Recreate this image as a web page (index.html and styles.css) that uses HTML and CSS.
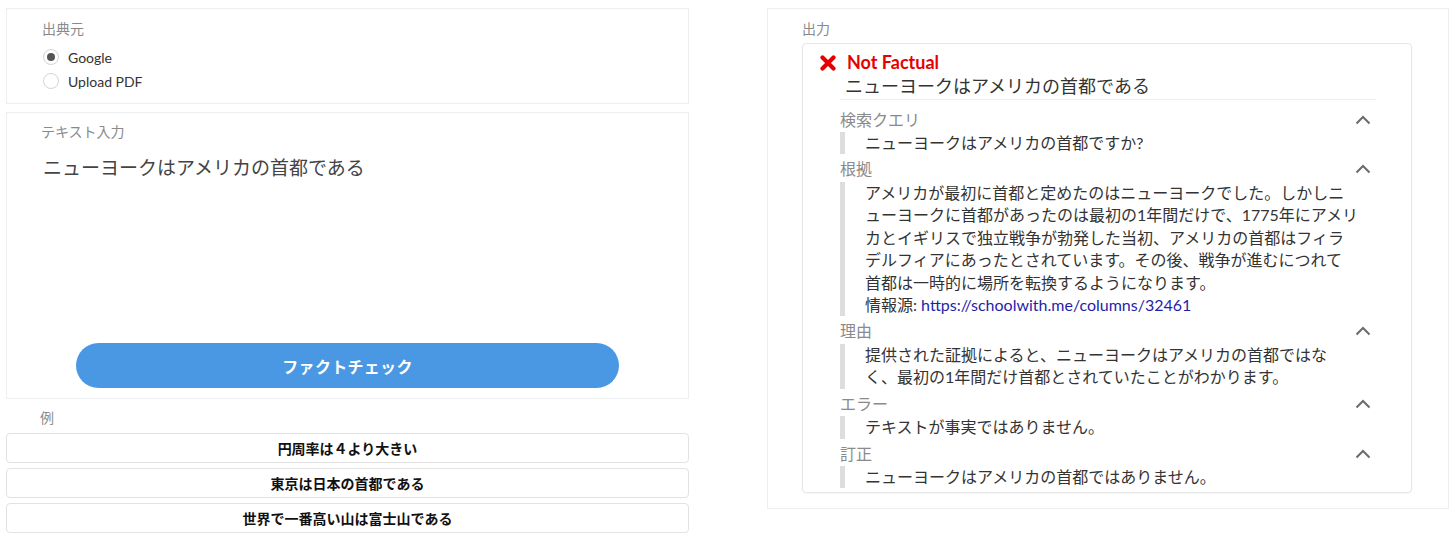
FILE: index.html
```html
<!DOCTYPE html>
<html lang="ja">
<head>
<meta charset="utf-8">
<title>Fact Check</title>
<link rel="stylesheet" href="styles.css">
</head>
<body>
<div class="app">
  <div class="col col-left">
    <section class="panel panel-source">
      <div class="label">出典元</div>
      <div class="radio checked"><span class="dot"></span>Google</div>
      <div class="radio"><span class="dot"></span>Upload PDF</div>
    </section>
    <section class="panel panel-input">
      <div class="label">テキスト入力</div>
      <div class="textarea">ニューヨークはアメリカの首都である</div>
      <button class="primary">ファクトチェック</button>
    </section>
    <div class="label examples-label">例</div>
    <div class="examples">
      <button class="example">円周率は４より大きい</button>
      <button class="example">東京は日本の首都である</button>
      <button class="example">世界で一番高い山は富士山である</button>
    </div>
  </div>
  <div class="col col-right">
    <section class="panel panel-output">
      <div class="label">出力</div>
      <div class="card">
        <div class="verdict">
          <svg class="x-icon" width="16" height="16" viewBox="0 0 16 16"><path d="M2.5 2.5 L13.5 13.5 M13.5 2.5 L2.5 13.5" fill="none" stroke="#e60000" stroke-width="4.2" stroke-linecap="round"/></svg>
          <span class="verdict-text">Not Factual</span>
        </div>
        <div class="claim">ニューヨークはアメリカの首都である</div>
        <div class="sections">
          <div class="section">
            <div class="sec-head"><span>検索クエリ</span><svg class="chev" width="16" height="10" viewBox="0 0 16 10"><path d="M1.5 8.5 L8 2 L14.5 8.5" fill="none" stroke="#6b6b6b" stroke-width="2"/></svg></div>
            <div class="sec-body">ニューヨークはアメリカの首都ですか?</div>
          </div>
          <div class="section">
            <div class="sec-head"><span>根拠</span><svg class="chev" width="16" height="10" viewBox="0 0 16 10"><path d="M1.5 8.5 L8 2 L14.5 8.5" fill="none" stroke="#6b6b6b" stroke-width="2"/></svg></div>
            <div class="sec-body">アメリカが最初に首都と定めたのはニューヨークでした。しかしニ<br>ューヨークに首都があったのは最初の1年間だけで、1775年にアメリ<br>カとイギリスで独立戦争が勃発した当初、アメリカの首都はフィラ<br>デルフィアにあったとされています。その後、戦争が進むにつれて<br>首都は一時的に場所を転換するようになります。<br>情報源: <a class="link" href="#">https://schoolwith.me/columns/32461</a></div>
          </div>
          <div class="section">
            <div class="sec-head"><span>理由</span><svg class="chev" width="16" height="10" viewBox="0 0 16 10"><path d="M1.5 8.5 L8 2 L14.5 8.5" fill="none" stroke="#6b6b6b" stroke-width="2"/></svg></div>
            <div class="sec-body">提供された証拠によると、ニューヨークはアメリカの首都ではな<br>く、最初の1年間だけ首都とされていたことがわかります。</div>
          </div>
          <div class="section">
            <div class="sec-head"><span>エラー</span><svg class="chev" width="16" height="10" viewBox="0 0 16 10"><path d="M1.5 8.5 L8 2 L14.5 8.5" fill="none" stroke="#6b6b6b" stroke-width="2"/></svg></div>
            <div class="sec-body">テキストが事実ではありません。</div>
          </div>
          <div class="section">
            <div class="sec-head"><span>訂正</span><svg class="chev" width="16" height="10" viewBox="0 0 16 10"><path d="M1.5 8.5 L8 2 L14.5 8.5" fill="none" stroke="#6b6b6b" stroke-width="2"/></svg></div>
            <div class="sec-body">ニューヨークはアメリカの首都ではありません。</div>
          </div>
        </div>
      </div>
    </section>
  </div>
</div>
</body>
</html>
```

FILE: styles.css
```css
* { box-sizing: border-box; }

html, body {
  margin: 0;
  padding: 0;
  background: #ffffff;
}

body {
  font-family: Lato, "Noto Sans CJK JP", sans-serif;
  color: #333333;
  width: 1456px;
  height: 541px;
  overflow: hidden;
}

.app {
  display: grid;
  grid-template-columns: 683px 682px;
  column-gap: 78px;
  padding: 8px 7px 0 6px;
}

.col {
  display: flex;
  flex-direction: column;
}

.panel {
  border: 1px solid #eceeef;
  background: #ffffff;
}

.label {
  font-size: 14px;
  line-height: 20px;
  color: #8a8a8a;
}

/* source panel */
.panel-source {
  height: 96px;
  padding: 10px 0 10px 35px;
}

.panel-source .label {
  margin-bottom: 6px;
}

.radio {
  display: flex;
  align-items: center;
  height: 24px;
  font-size: 14px;
  color: #333333;
  padding-left: 1px;
}

.dot {
  width: 16px;
  height: 16px;
  border-radius: 50%;
  border: 1px solid #d4d4d4;
  margin-right: 9px;
  background: #ffffff;
  position: relative;
  flex: none;
}

.radio.checked .dot::after {
  content: "";
  position: absolute;
  left: 3px;
  top: 3px;
  width: 8px;
  height: 8px;
  border-radius: 50%;
  background: #555555;
}

/* input panel */
.panel-input {
  margin-top: 8px;
  height: 287px;
  padding: 9px 69px 10px 35px;
  display: flex;
  flex-direction: column;
}

.panel-input .label {
  margin-left: -1px;
}

.textarea {
  flex: 1;
  margin-top: 12px;
  font-size: 19px;
  line-height: 28px;
  color: #444444;
  padding-left: 1px;
}

.primary {
  margin-left: 34px;
  height: 45px;
  border: none;
  border-radius: 23px;
  background: #4a98e3;
  color: #ffffff;
  font-family: inherit;
  font-size: 16px;
  font-weight: 700;
  letter-spacing: 0.3px;
}

/* examples */
.examples-label {
  margin-top: 9px;
  padding-left: 34px;
}

.examples {
  margin-top: 5px;
  display: flex;
  flex-direction: column;
  gap: 5px;
}

.example {
  height: 30px;
  border: 1px solid #e2e2e2;
  border-radius: 4px;
  background: #ffffff;
  font-family: inherit;
  font-size: 14px;
  font-weight: 700;
  color: #111111;
}

/* output panel */
.panel-output {
  height: 501px;
  padding: 10px 36px 15px 34px;
}

.card {
  margin-top: 4px;
  height: 450px;
  border: 1px solid #e6e6e6;
  border-radius: 4px;
  box-shadow: 0 1px 2px rgba(0, 0, 0, 0.04);
  padding: 6px 35px 0 17px;
}

.verdict {
  display: flex;
  align-items: center;
  height: 24px;
}

.x-icon {
  margin-right: 11px;
  margin-top: 2px;
}

.verdict-text {
  color: #e60000;
  font-size: 18px;
  font-weight: 700;
}

.claim {
  font-size: 18px;
  line-height: 25px;
  color: #333333;
  padding-left: 25px;
}

.sections {
  margin-left: 20px;
  border-top: 1px solid #eeeeee;
  padding-top: 6px;
}

.section {
  margin-bottom: 1.5px;
}

.sec-head {
  display: flex;
  justify-content: space-between;
  align-items: center;
  height: 25px;
  font-size: 16px;
  color: #8a8a8a;
  padding-right: 5px;
}

.chev {
  margin-top: 2px;
}

.sec-body {
  margin-top: 1px;
  border-left: 5px solid #dddddd;
  padding-left: 20px;
  font-size: 16px;
  line-height: 22.4px;
  color: #333333;
}

.link {
  color: #1f1fa8;
  text-decoration: none;
}
```
